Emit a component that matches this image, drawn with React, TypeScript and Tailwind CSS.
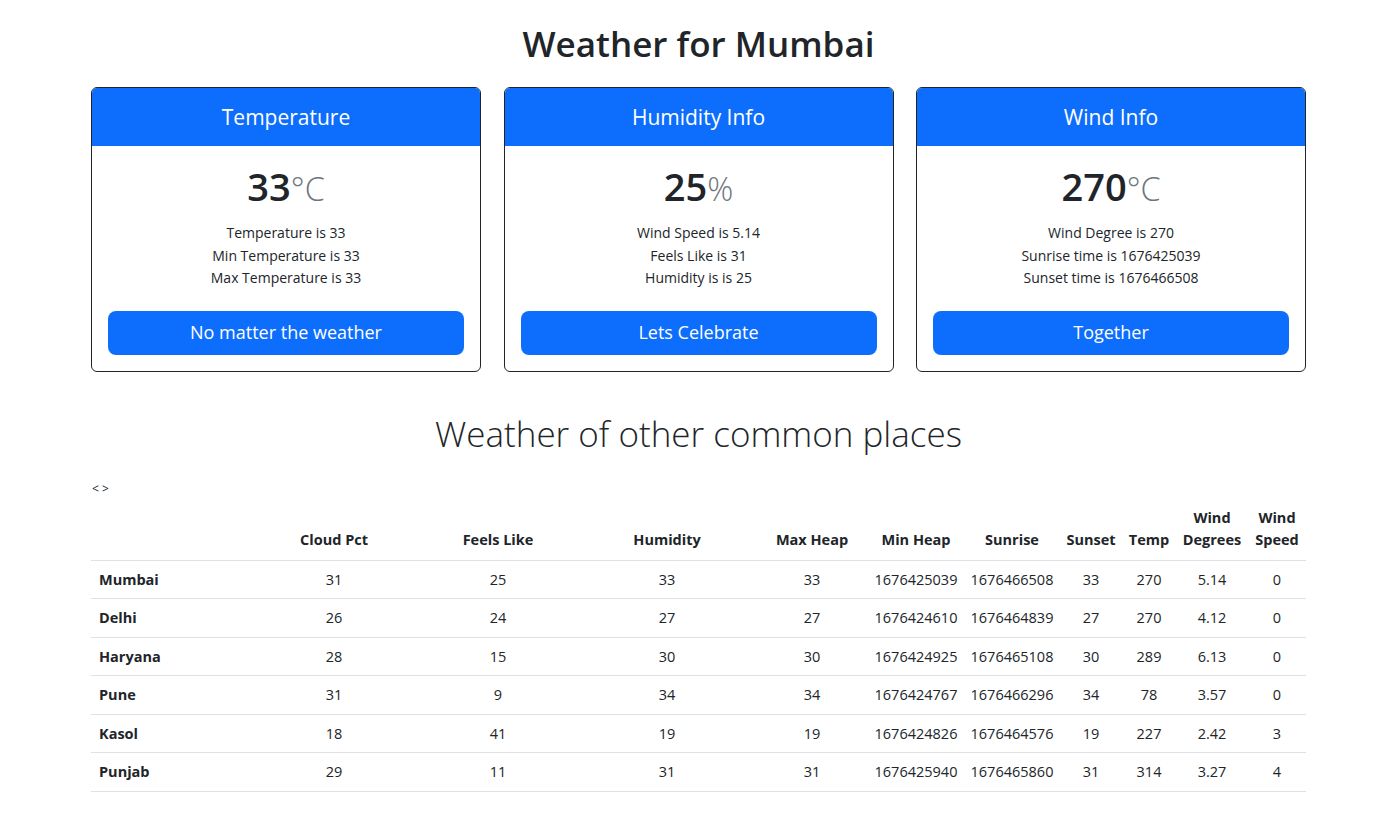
const cards = [
  {
    title: 'Temperature',
    value: '33',
    unit: '°C',
    lines: ['Temperature is 33', 'Min Temperature is 33', 'Max Temperature is 33'],
    button: 'No matter the weather',
  },
  {
    title: 'Humidity Info',
    value: '25',
    unit: '%',
    lines: ['Wind Speed is 5.14', 'Feels Like is 31', 'Humidity is is 25'],
    button: 'Lets Celebrate',
  },
  {
    title: 'Wind Info',
    value: '270',
    unit: '°C',
    lines: ['Wind Degree is 270', 'Sunrise time is 1676425039', 'Sunset time is 1676466508'],
    button: 'Together',
  },
];

const rows = [
  ['Mumbai', '31', '25', '33', '33', '1676425039', '1676466508', '33', '270', '5.14', '0'],
  ['Delhi', '26', '24', '27', '27', '1676424610', '1676464839', '27', '270', '4.12', '0'],
  ['Haryana', '28', '15', '30', '30', '1676424925', '1676465108', '30', '289', '6.13', '0'],
  ['Pune', '31', '9', '34', '34', '1676424767', '1676466296', '34', '78', '3.57', '0'],
  ['Kasol', '18', '41', '19', '19', '1676424826', '1676464576', '19', '227', '2.42', '3'],
  ['Punjab', '29', '11', '31', '31', '1676425940', '1676465860', '31', '314', '3.27', '4'],
];

const colWidths = [
  'w-[159px]',
  'w-[168px]',
  'w-[160px]',
  'w-[178px]',
  'w-[112px]',
  'w-[96px]',
  'w-[96px]',
  'w-[62px]',
  'w-[54px]',
  'w-[72px]',
  'w-[58px]',
];

const WeatherCard = ({ card }: { card: (typeof cards)[number] }) => (
  <div className="flex flex-col rounded-[6px] border border-[#212529] overflow-hidden bg-white">
    <div className="h-[58px] pt-[2px] flex items-center justify-center bg-[#0d6efd] text-white text-[21px]">
      {card.title}
    </div>
    <div className="flex flex-col items-center px-4 pt-4 pb-4">
      <h1 className="text-[38px] leading-[48px] font-semibold text-[#212529]">
        {card.value}
        <small className="text-[#6c757d] font-light text-[0.85em] leading-none">{card.unit}</small>
      </h1>
      <ul className="mt-[12px] mb-[21px] text-[14px] leading-[22.5px] text-[#212529] text-center">
        {card.lines.map((l) => (
          <li key={l}>{l}</li>
        ))}
      </ul>
      <button className="w-full h-[44px] rounded-[8px] bg-[#0d6efd] text-white text-[18px]">
        {card.button}
      </button>
    </div>
  </div>
);

export default function App() {
  const headers = [
    '',
    'Cloud Pct',
    'Feels Like',
    'Humidity',
    'Max Heap',
    'Min Heap',
    'Sunrise',
    'Sunset',
    'Temp',
    'Wind Degrees',
    'Wind Speed',
  ];

  return (
    <div className="min-h-screen bg-white text-[#212529] font-['Open_Sans',sans-serif]">
      <div className="w-[1215px] ml-[91px] pt-5">
        <h1 className="text-center text-[35px] leading-[48px] font-semibold mb-[19px]">Weather for Mumbai</h1>

        <div className="grid grid-cols-3 gap-[22.5px]">
          {cards.map((c) => (
            <WeatherCard key={c.title} card={c} />
          ))}
        </div>

        <h2 className="text-center text-[35px] leading-[48px] font-light mt-[38px] mb-[23px]">
          Weather of other common places
        </h2>

        <div className="text-[12px] leading-[16px] pl-[1px] mb-[2px]">&lt; &gt;</div>

        <table className="table-fixed w-full border-collapse text-[14.5px]">
          <colgroup>
            {colWidths.map((w, i) => (
              <col key={i} className={w} />
            ))}
          </colgroup>
          <thead>
            <tr className="border-b border-[#dee2e6]">
              {headers.map((h, i) => (
                <th key={i} className="px-1 py-2 leading-[22.5px] align-bottom text-center font-bold">
                  {h.startsWith('Wind') ? (
                    <>
                      Wind
                      <br />
                      {h.split(' ')[1]}
                    </>
                  ) : (
                    h
                  )}
                </th>
              ))}
            </tr>
          </thead>
          <tbody>
            {rows.map((r) => (
              <tr key={r[0]} className="border-b border-[#dee2e6]">
                {r.map((v, i) =>
                  i === 0 ? (
                    <th key={i} className="px-2 py-2 leading-[21.5px] text-left font-bold">
                      {v}
                    </th>
                  ) : (
                    <td key={i} className="px-1 py-2 leading-[21.5px] text-center">
                      {v}
                    </td>
                  ),
                )}
              </tr>
            ))}
          </tbody>
        </table>
      </div>
    </div>
  );
}
